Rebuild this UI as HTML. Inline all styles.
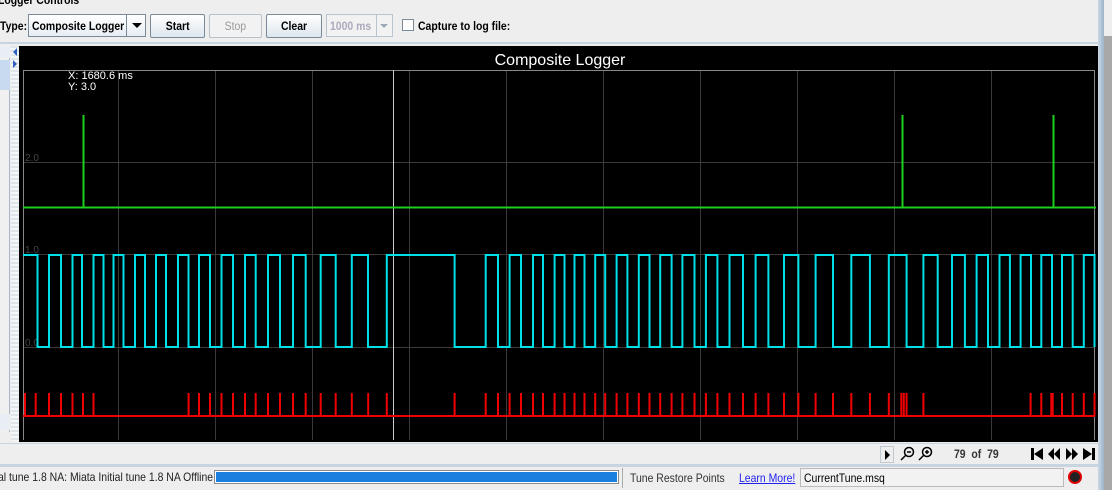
<!DOCTYPE html>
<html><head><style>
*{margin:0;padding:0;box-sizing:border-box}
body{width:1112px;height:490px;background:#eeeeee;font-family:"Liberation Sans",sans-serif;font-size:12px;position:relative;overflow:hidden}
.a{position:absolute}
.n{transform:scaleX(0.87);transform-origin:0 0;white-space:nowrap}
.btn{position:absolute;top:14px;height:24px;border:1px solid #7a8a99;background:linear-gradient(#fff,#dde6ee);font-weight:bold;font-size:12px;text-align:center;line-height:22px;border-radius:2px}
</style></head><body>
<div class="a n" style="left:-2px;top:-7px;font-weight:bold;font-size:12px">Logger Controls</div>
<div class="a n" style="left:0;top:19px;font-weight:bold">Type:</div>
<div class="a" style="left:28px;top:14px;width:118px;height:23px;border:1px solid #7a8a99;background:linear-gradient(#fff,#e6edf3)"><span class="a n" style="left:3px;top:4px;font-weight:bold">Composite Logger</span><div class="a" style="left:97px;top:0;width:1px;height:21px;background:#7a8a99"></div><div class="a" style="left:103px;top:8px;border-left:5px solid transparent;border-right:5px solid transparent;border-top:5px solid #000"></div></div>
<div class="btn" style="left:150px;width:55px"><span class="n" style="display:inline-block;transform-origin:50% 0">Start</span></div>
<div class="btn" style="left:209px;width:53px;color:#999;border-color:#b8c0c8;background:#f2f2f2;font-weight:normal"><span class="n" style="display:inline-block;transform-origin:50% 0">Stop</span></div>
<div class="btn" style="left:266px;width:56px"><span class="n" style="display:inline-block;transform-origin:50% 0">Clear</span></div>
<div class="a" style="left:326px;top:14px;width:67px;height:23px;border:1px solid #b8c4d0;background:#f2f2f2;color:#aab;font-weight:bold"><span class="a n" style="left:3px;top:4px">1000 ms</span><div class="a" style="left:49px;top:0;width:1px;height:21px;background:#b8c4d0"></div><div class="a" style="left:53px;top:9px;border-left:4px solid transparent;border-right:4px solid transparent;border-top:4px solid #9ab"></div></div>
<div class="a" style="left:402px;top:19px;width:12px;height:12px;border:1px solid #7a8a99;background:#fff"></div>
<div class="a n" style="left:418px;top:19px;font-weight:bold">Capture to log file:</div>
<div class="a" style="left:0;top:42px;width:1112px;height:2px;background:#c8d4e0"></div>
<div class="a" style="left:0;top:46px;width:10px;height:386px;background:#f0f0f0;border-right:1px solid #a8b8c8"></div>
<div class="a" style="left:0;top:46px;width:10px;height:12px;background:#e8eef4"></div>
<div class="a" style="left:0;top:60px;width:10px;height:30px;background:#c8daf0"></div>
<div class="a" style="left:0;top:414px;width:10px;height:16px;background:#e8eef4"></div>
<div class="a" style="left:11px;top:46px;width:8px;height:395px;background:repeating-linear-gradient(#dde4ea 0 2px,#f4f6f8 2px 4px)"></div>
<div class="a" style="left:13px;top:48px;border-top:4px solid transparent;border-bottom:4px solid transparent;border-right:4px solid #3060c0"></div>
<div class="a" style="left:13px;top:60px;border-top:4px solid transparent;border-bottom:4px solid transparent;border-left:4px solid #3060c0"></div>
<svg class="a" style="left:19px;top:46px" width="1080" height="396" viewBox="19 46 1080 396">
<rect x="19" y="46" width="1080" height="396" fill="#000"/>
<text x="560" y="65" fill="#fff" font-family="Liberation Sans" font-size="16" text-anchor="middle">Composite Logger</text>
<g stroke="#3a3a3a" stroke-width="1">
<path d="M118.5 70V440M215.5 70V440M312.5 70V440M409.5 70V440M506.5 70V440M603.5 70V440M700.5 70V440M797.5 70V440M894.5 70V440M991.5 70V440M23 162.5H1094M23 254.5H1094M23 347.5H1094"/>
</g>
<path d="M23.5 440V70.5H1094.5V440" stroke="#888" fill="none"/>
<text x="25" y="161" fill="#444" font-size="10" font-family="Liberation Sans">2.0</text>
<text x="25" y="253" fill="#444" font-size="10" font-family="Liberation Sans">1.0</text>
<text x="25" y="346" fill="#444" font-size="10" font-family="Liberation Sans">0.0</text>
<line x1="393.5" y1="70" x2="393.5" y2="440" stroke="#ccc"/>
<text x="68" y="79" fill="#fff" font-size="11" font-family="Liberation Sans">X: 1680.6 ms</text>
<text x="68" y="90" fill="#fff" font-size="11" font-family="Liberation Sans">Y: 3.0</text>
<path d="M23 207.5H1096M83.5 207V115M902.5 207V115M1053.5 207V115" stroke="#1ed01e" stroke-width="2" fill="none"/>
<path fill="none" stroke="#00e0e8" stroke-width="2" d="M23 255H37.5V347H49V255H61V347H72.5V255H82V347H93.5V255H103.5V347H113.5V255H123.5V347H135V255H145V347H156V255H166V347H178V255H188.5V347H199V255H210V347H221.5V255H233V347H245V255H255.7V347H268V255H280V347H293V255H305.7V347H320.7V255H335.7V347H351.8V255H368V347H386.8V255H454.6V347H485.7V255H498V347H509.6V255H521V347H533V255H543V347H554.6V255H564.5V347H574.5V255H584.5V347H595.2V255H605.2V347H616.6V255H627.4V347H638.8V255H649.5V347H660.2V255H671.6V347H682.4V255H694.5V347H705.9V255H717.4V347H729.5V255H743V347H755.6V255H768.4V347H784V255H798.4V347H815.6V255H833V347H851.3V255H869.9V347H888.8V255H906.6V347H923.4V255H937.7V347H952V255H964.9V347H976.6V255H988V347H999.5V255H1009.9V347H1020.6V255H1031V347H1041.3V255H1052V347H1062V255H1072.7V347H1083.8V255H1094.5V347"/>
<path fill="none" stroke="#f00000" stroke-width="2" d="M23 416H1095M25 416V393M35.7 416V393M49 416V393M61 416V393M72.5 416V393M83 416V393M93.5 416V393M188.6 416V393M199 416V393M210 416V393M221.5 416V393M233 416V393M245 416V393M255.7 416V393M268 416V393M280 416V393M293 416V393M305.7 416V393M320.7 416V393M335.7 416V393M351.8 416V393M368.2 416V393M386.8 416V393M454.6 416V393M485.7 416V393M498 416V393M509.6 416V393M521 416V393M533 416V393M543 416V393M554.6 416V393M564.5 416V393M574.5 416V393M584.5 416V393M595.2 416V393M605.2 416V393M616.6 416V393M627.4 416V393M638.8 416V393M649.5 416V393M660.2 416V393M671.6 416V393M682.4 416V393M694.5 416V393M705.9 416V393M717.4 416V393M729.5 416V393M743 416V393M755.6 416V393M768.4 416V393M784 416V393M798.4 416V393M815.6 416V393M833 416V393M851.3 416V393M869.9 416V393M888.8 416V393M901.3 416V393M903.8 416V393M906.6 416V393M923.4 416V393M1030.6 416V393M1041.3 416V393M1051.3 416V393M1052.7 416V393M1062 416V393M1072.7 416V393M1083.8 416V393M1094.5 416V393"/>
</svg>
<div class="a" style="left:1098px;top:0;width:6px;height:490px;background:linear-gradient(90deg,#c8d8e8,#9fb4c8)"></div>
<div class="a" style="left:1104px;top:0;width:8px;height:490px;background:#a8a8a8"></div>
<div class="a" style="left:1104px;top:0;width:8px;height:36px;background:#eee"></div>
<div class="a" style="left:0;top:443px;width:1098px;height:1px;background:#c8d4e0"></div>
<div class="a" style="left:880px;top:446px;width:14px;height:17px;border:1px solid #c0c8d0;background:#eee"></div>
<div class="a" style="left:885px;top:450px;border-top:5px solid transparent;border-bottom:5px solid transparent;border-left:5px solid #000"></div>
<svg class="a" style="left:898px;top:445px" width="40" height="18" viewBox="0 0 40 18">
<g fill="none" stroke="#000" stroke-width="1.5"><circle cx="11" cy="7" r="4.5"/><path d="M8 10L3 15"/><path d="M9 7h4"/>
<circle cx="29" cy="7" r="4.5"/><path d="M26 10L21 15"/><path d="M27 7h4M29 5v4"/></g></svg>
<div class="a n" style="left:954px;top:447px;font-weight:bold;color:#333">79&nbsp;&nbsp;of&nbsp;&nbsp;79</div>
<svg class="a" style="left:1030px;top:446px" width="66" height="16" viewBox="0 0 66 16">
<g fill="#000"><rect x="1" y="2" width="3" height="12"/><path d="M13 2v12L4 8z"/>
<path d="M24 2v12L18 8zM30 2v12L24 8z"/>
<path d="M36 2v12l6-6zM42 2v12l6-6z"/>
<path d="M53 2v12l9-6z"/><rect x="62" y="2" width="3" height="12"/></g></svg>
<div class="a" style="left:0;top:464px;width:1098px;height:3px;background:#c8d4e0"></div>
<div class="a" style="left:0;top:467px;width:1098px;height:21px;background:#eee"></div>
<div class="a n" style="left:-2px;top:470px;color:#222">al tune 1.8 NA: Miata Initial tune 1.8 NA Offline</div>
<div class="a" style="left:214px;top:470px;width:405px;height:14px;border:1px solid #888;background:#fff;padding:1px"><div style="width:100%;height:100%;background:#1a80e0"></div></div>
<div class="a" style="left:622px;top:468px;width:1px;height:20px;background:#aaa"></div>
<div class="a n" style="left:630px;top:471px;color:#333">Tune Restore Points</div>
<div class="a n" style="left:739px;top:471px;color:#22e;text-decoration:underline">Learn More!</div>
<div class="a" style="left:800px;top:468px;width:264px;height:19px;border:1px solid #bbb;background:#f2f2f2"><span class="a n" style="left:3px;top:2px">CurrentTune.msq</span></div>
<div class="a" style="left:1068px;top:470px;width:14px;height:14px;border-radius:50%;border:2px solid #d00;background:#222"></div>
</body></html>
